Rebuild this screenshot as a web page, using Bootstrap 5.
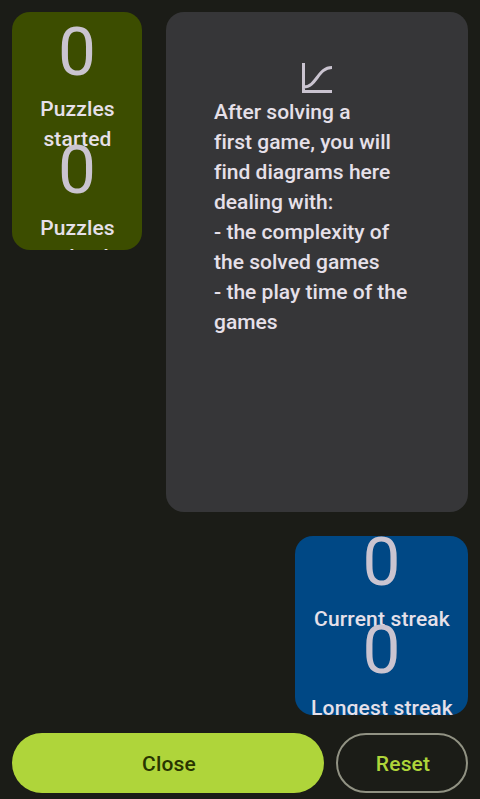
<!DOCTYPE html>
<html lang="en">
<head>
<meta charset="utf-8">
<meta name="viewport" content="width=device-width, initial-scale=1">
<title>Statistics</title>
<link href="https://cdn.jsdelivr.net/npm/bootstrap@5.3.0/dist/css/bootstrap.min.css" rel="stylesheet">
<style>
body{background:#1b1c17;color:#e6e0e9;font-family:Roboto,sans-serif;font-size:21px;font-weight:500;line-height:30px;letter-spacing:.15px}
.screen{height:799px;padding:12px 12px 6px}
.tile{border-radius:18px;border:0;color:inherit}
.started{width:130px;height:238px;background:#3c4d00}
.chart-info{width:302px;height:500px;background:#363638;padding:48px}
.info-text{letter-spacing:.02px;padding-top:1px}
.streaks{width:173px;height:179px;background:#004885}
.stat{min-height:0;flex:1 1 0}
.stat-label{padding-left:1px}
.started .stat{flex:0 0 118px}
.started .stat + .stat .stat-label{line-height:29px;padding-top:1px}
.streaks .stat{flex:0 0 88px}
.streaks .stat-body{margin-top:-14px}
.value{font-size:67.5px;line-height:78px;font-weight:400;color:#cac4d0;letter-spacing:0;padding-top:1px;margin-bottom:3px}
.stat + .stat .value{margin-bottom:4px}
.actions{gap:12px;margin-top:18px}
.action{height:60px;border-radius:30px;font-size:21px;font-weight:500;line-height:30px;padding:2px 0 0 2px;letter-spacing:.15px}
.close-btn,.close-btn:hover{background:#afd53a;color:#283500;border:0}
.reset-btn,.reset-btn:hover{width:132px;color:#afd53a;border:2px solid #919283}
</style>
<script src="https://cdn.jsdelivr.net/npm/bootstrap@5.3.0/dist/js/bootstrap.bundle.min.js"></script>
</head>
<body>
<main class="screen d-flex flex-column overflow-hidden">
  <div class="d-flex justify-content-between align-items-start">
    <section class="tile card started overflow-hidden text-center">
      <div class="stat"><div class="stat-body"><div class="value">0</div><div class="stat-label">Puzzles<br>started</div></div></div>
      <div class="stat"><div class="stat-body"><div class="value">0</div><div class="stat-label">Puzzles<br>solved</div></div></div>
    </section>
    <section class="tile card chart-info">
      <svg class="d-block mx-auto" width="36" height="36" viewBox="0 0 36 36" fill="none" stroke="#cac4d0" stroke-width="3" aria-hidden="true"><path d="M4.5 3v28.500H33M4.500 27C18 27 18.500 7.500 33 7.500"/></svg>
      <div class="info-text">After solving a<br>first game, you will<br>find diagrams here<br>dealing with:<br>- the complexity of<br>the solved games<br>- the play time of the<br>games</div>
    </section>
  </div>
  <section class="tile card streaks overflow-hidden text-center align-self-end mt-4 flex-shrink-0">
    <div class="stat"><div class="stat-body"><div class="value">0</div><div class="stat-label">Current streak</div></div></div>
    <div class="stat"><div class="stat-body"><div class="value">0</div><div class="stat-label">Longest streak</div></div></div>
  </section>
  <div class="actions d-flex">
    <button type="button" class="btn action close-btn flex-grow-1">Close</button>
    <button type="button" class="btn action reset-btn">Reset</button>
  </div>
</main>
</body>
</html>
